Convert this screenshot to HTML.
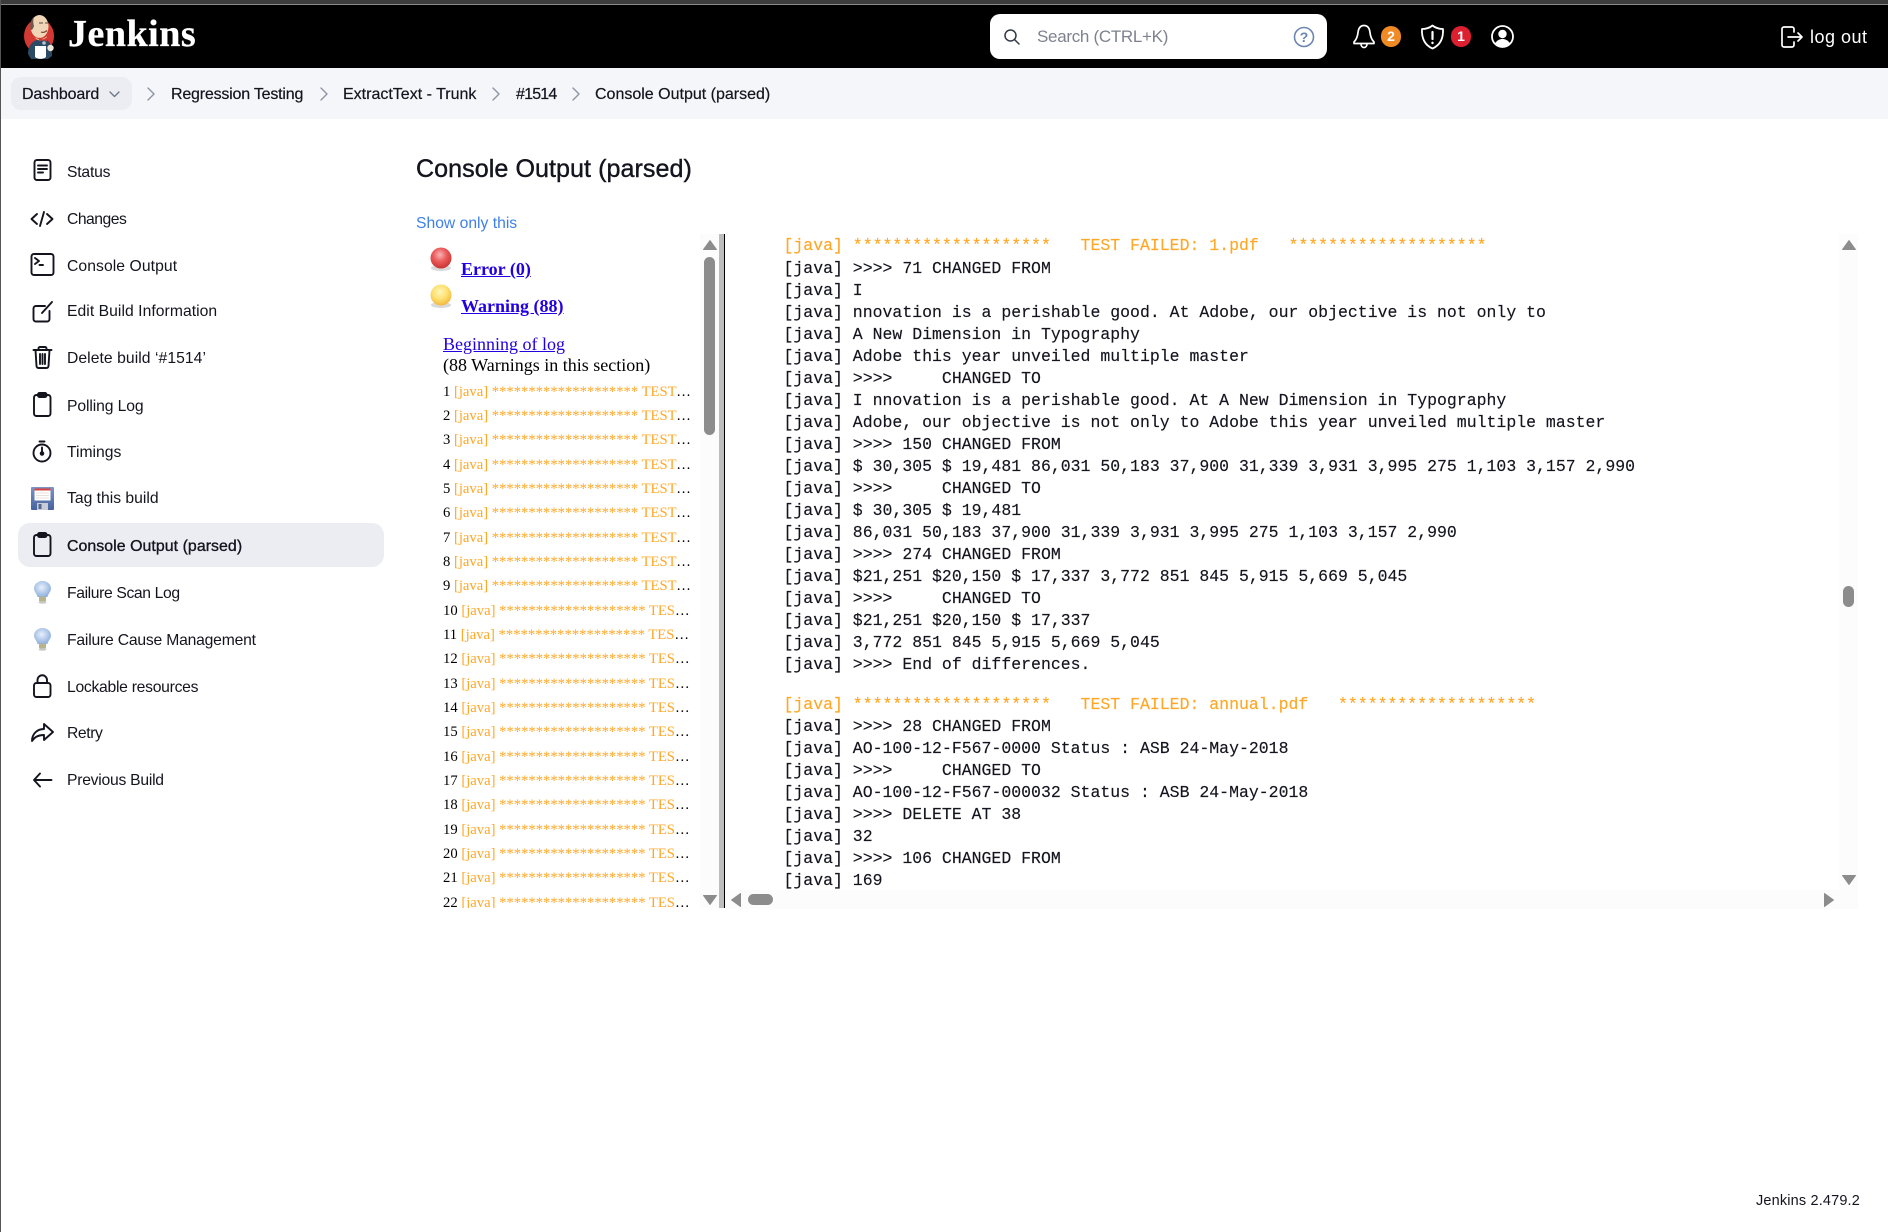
<!DOCTYPE html>
<html lang="en"><head><meta charset="utf-8"><title>Console Output (parsed)</title>
<style>
html,body{margin:0;padding:0;background:#fff}
body{position:relative;width:1888px;height:1232px;overflow:hidden;font-family:"Liberation Sans",sans-serif;color:#14141f}
.a{position:absolute;white-space:nowrap}
.topstrip{left:0;top:0;width:1888px;height:4px;background:#3c3c3c}
.topline{left:0;top:4px;width:1888px;height:1px;background:#8a8a8a}
.hdr{left:0;top:5px;width:1888px;height:63px;background:#000}
.crumbbar{left:0;top:68px;width:1888px;height:51px;background:#f5f6f9}
.edge{left:0;top:0;width:1px;height:1232px;background:#555;z-index:5}
.bc{top:85px;line-height:20px;font-size:16px;-webkit-text-stroke:.2px #14141f}
.side{left:67px;font-size:15.7px;line-height:20px}
.ic{position:absolute;left:28px;width:28px;height:28px;fill:none;stroke:#14141f;stroke-width:1.9;stroke-linecap:round;stroke-linejoin:round}
.ser{font-family:"Liberation Serif",serif;color:#000}
.lnk{color:#2200e0;text-decoration:underline}
.row{position:absolute;left:443px;width:250px;height:24px;line-height:24px;font-family:"Liberation Serif",serif;font-size:14.65px;color:#000;white-space:nowrap;overflow:hidden;text-overflow:ellipsis}
.row span,.or{color:#ffa726}
pre{margin:0;position:absolute;left:58.5px;font-family:"Liberation Mono",monospace;font-size:16.5px;line-height:22px;color:#14141f;-webkit-text-stroke:.15px #14141f}
pre.or{-webkit-text-stroke:.15px #ffa726;color:#ffa726}
</style></head><body>
<div class="a edge"></div>
<div class="a topstrip"></div><div class="a topline"></div><div class="a hdr"></div><div class="a crumbbar"></div>

<!-- logo -->
<svg class="a" style="left:22px;top:14px" width="36" height="46" viewBox="0 0 36 46">
<ellipse cx="17" cy="22" rx="15" ry="17" fill="#d33833"/>
<path d="M6 40C6 31 11 25 21 25c6 0 9 5 9 17l-4 3H9z" fill="#2c4a63"/>
<ellipse cx="17.500" cy="12.500" rx="9" ry="11.500" fill="#f0d6b7"/>
<path d="M8.500 10C9 6 10.500 4 12 3c-1 3-1 6 0 9-1 3-2 4-3 4-1-2-.8-4-.5-6z" fill="#6d5a4e"/>
<path d="M17 9h4M23 9h3" stroke="#5a4a40" stroke-width="1" fill="none"/>
<path d="M19 18c2 .8 4 .3 6-1.500" stroke="#7a4a3a" stroke-width="1.200" fill="none"/>
<path d="M13 23c3 3 8 3 12-1l-1 3c-3 2-7 2-10 0z" fill="#e0bc98"/>
<path d="M17 23.500l4 2 4-2v4l-4-1.500-4 1.500z" fill="#d33833"/>
<path d="M13 32h11v11c-3 2.500-8 2.500-11 0z" fill="#fff"/>
<circle cx="28.500" cy="34" r="3.200" fill="#eee6da"/>
<circle cx="22" cy="29" r="1.800" fill="#b9c6cf"/>
</svg>
<div class="a" style="left:68px;top:12px;font-family:'Liberation Serif',serif;font-weight:bold;font-size:38px;line-height:44px;color:#fff;letter-spacing:.5px;-webkit-text-stroke:.3px #fff">Jenkins</div>

<!-- search -->
<div class="a" style="left:990px;top:14px;width:337px;height:45px;background:#fff;border-radius:10px"></div>
<svg class="a" style="left:1003px;top:28px" width="18" height="18" viewBox="0 0 18 18" fill="none" stroke="#333a45" stroke-width="1.5" stroke-linecap="round"><circle cx="7.500" cy="7.500" r="5.500"/><path d="M11.800 11.800L16 16"/></svg>
<div class="a" style="left:1037px;top:26px;font-size:17px;line-height:22px;color:#7d828e;letter-spacing:-.3px">Search (CTRL+K)</div>
<svg class="a" style="left:1293px;top:26px" width="22" height="22" viewBox="0 0 22 22"><circle cx="11" cy="11" r="9.500" fill="none" stroke="#6b85b0" stroke-width="1.600"/><text x="11" y="16" text-anchor="middle" font-family="Liberation Sans" font-size="14" font-weight="bold" fill="#6b85b0">?</text></svg>

<!-- bell -->
<svg class="a" style="left:1352px;top:24px" width="24" height="26" viewBox="0 0 24 26" fill="none" stroke="#fff" stroke-width="1.700" stroke-linejoin="round" stroke-linecap="round"><path d="M12 1.500c-3.500 0-5.500 2.800-6 7-.4 4-1.200 6.500-4 9.500v1.500h20V18c-2.800-3-3.600-5.500-4-9.500-.5-4.200-2.500-7-6-7z"/><path d="M9 20c0 2 1.300 3.500 3 3.500s3-1.500 3-3.500"/></svg>
<div class="a" style="left:1381px;top:26px;width:20px;height:21px;border-radius:10px;background:#f08a24;color:#fff;font-weight:bold;font-size:14px;line-height:21px;text-align:center">2</div>
<!-- shield -->
<svg class="a" style="left:1420px;top:24px" width="25" height="26" viewBox="0 0 25 26" fill="none" stroke="#fff" stroke-width="1.800" stroke-linecap="round" stroke-linejoin="round"><path d="M12.500 1.500C15.500 4 19 5 23 5c.5 9.500-2.500 16-10.500 19.500C4.500 21 1.500 14.500 2 5c4 0 7.500-1 10.500-3.500z"/><path d="M12.500 8v7" stroke-width="2.200"/><path d="M12.500 18.800v.2" stroke-width="2.400"/></svg>
<div class="a" style="left:1451px;top:26px;width:20px;height:21px;border-radius:10px;background:#dc2030;color:#fff;font-weight:bold;font-size:14px;line-height:21px;text-align:center">1</div>
<!-- user -->
<svg class="a" style="left:1490px;top:24px" width="25" height="25" viewBox="0 0 25 25"><circle cx="12.500" cy="12.500" r="10.500" fill="#000" stroke="#fff" stroke-width="1.800"/><circle cx="12.500" cy="10" r="4.200" fill="#fff"/><path d="M5 19.500c2-3.500 5-4.500 7.500-4.500s5.500 1 7.500 4.500c-2 2-4.500 3.200-7.500 3.200s-5.500-1.200-7.500-3.200z" fill="#fff"/></svg>
<!-- logout -->
<svg class="a" style="left:1780px;top:25px" width="24" height="24" viewBox="0 0 24 24" fill="none" stroke="#fff" stroke-width="1.700" stroke-linecap="round" stroke-linejoin="round"><path d="M14 7V4a2 2 0 0 0-2-2H4a2 2 0 0 0-2 2v16a2 2 0 0 0 2 2h8a2 2 0 0 0 2-2v-3"/><path d="M8 12h14M18 8l4 4-4 4"/></svg>
<div class="a" style="left:1810px;top:26px;font-size:18px;line-height:22px;color:#fff;letter-spacing:.5px">log out</div>

<!-- breadcrumbs -->
<div class="a" style="left:11px;top:77px;width:121px;height:33px;background:#ecedf2;border-radius:10px"></div>
<div class="a bc" style="left:22px;letter-spacing:-.13px">Dashboard</div>
<svg class="a" style="left:108px;top:90px" width="13" height="9" viewBox="0 0 13 9" fill="none" stroke="#6d7486" stroke-width="1.300" stroke-linecap="round" stroke-linejoin="round"><path d="M2 2l4.500 4.500L11 2"/></svg>
<svg class="a" style="left:146px;top:85px" width="10" height="18" viewBox="0 0 10 18" fill="none" stroke="#8d93a3" stroke-width="1.400" stroke-linecap="round" stroke-linejoin="round"><path d="M2 3l6 6-6 6"/></svg>
<div class="a bc" style="left:171px;letter-spacing:-.2px">Regression Testing</div>
<svg class="a" style="left:319px;top:85px" width="10" height="18" viewBox="0 0 10 18" fill="none" stroke="#8d93a3" stroke-width="1.400" stroke-linecap="round" stroke-linejoin="round"><path d="M2 3l6 6-6 6"/></svg>
<div class="a bc" style="left:343px">ExtractText - Trunk</div>
<svg class="a" style="left:491px;top:85px" width="10" height="18" viewBox="0 0 10 18" fill="none" stroke="#8d93a3" stroke-width="1.400" stroke-linecap="round" stroke-linejoin="round"><path d="M2 3l6 6-6 6"/></svg>
<div class="a bc" style="left:516px;letter-spacing:-.8px">#1514</div>
<svg class="a" style="left:571px;top:85px" width="10" height="18" viewBox="0 0 10 18" fill="none" stroke="#8d93a3" stroke-width="1.400" stroke-linecap="round" stroke-linejoin="round"><path d="M2 3l6 6-6 6"/></svg>
<div class="a bc" style="left:595px">Console Output (parsed)</div>

<!-- sidebar -->
<div class="a" style="left:18px;top:523px;width:366px;height:44px;background:#ecedf2;border-radius:12px"></div>

<svg class="ic" style="top:158px" viewBox="0 0 28 28"><rect x="6.500" y="2" width="16" height="20" rx="2.500"/><path d="M10 7.500h9M10 11h9M10 14.500h5"/></svg>
<div class="a side" style="top:163px;letter-spacing:-.2px">Status</div>
<svg class="ic" style="top:205px" viewBox="0 0 28 28"><path d="M9 9l-5.500 5L9 19M19 9l5.500 5L19 19M16 7l-4 14"/></svg>
<div class="a side" style="top:210px;letter-spacing:-.5px">Changes</div>
<svg class="ic" style="top:252px" viewBox="0 0 28 28"><rect x="3.500" y="2" width="22" height="21" rx="2.500"/><path d="M7 6l4 3-4 3M11.500 13H15"/></svg>
<div class="a side" style="top:257px;letter-spacing:.08px">Console Output</div>
<svg class="ic" style="top:297px" viewBox="0 0 28 28"><path d="M17 9H8a2.500 2.500 0 0 0-2.500 2.500v10.500A2.500 2.500 0 0 0 8 24.500h11a2.500 2.500 0 0 0 2.500-2.500V14"/><path d="M14 16L24 5"/></svg>
<div class="a side" style="top:302px;letter-spacing:.05px">Edit Build Information</div>
<svg class="ic" style="top:344px" viewBox="0 0 28 28"><path d="M5.500 6h18M10.500 6V4.500a1.500 1.500 0 0 1 1.500-1.500h5a1.500 1.500 0 0 1 1.500 1.500V6M7.500 6l1 16a2 2 0 0 0 2 2h8a2 2 0 0 0 2-2l1-16M12 10v10M14.500 10v10M17 10v10"/></svg>
<div class="a side" style="top:349px;letter-spacing:.06px">Delete build ‘#1514’</div>
<svg class="ic" style="top:392px" viewBox="0 0 28 28"><rect x="6" y="3" width="16.500" height="21" rx="2.500"/><rect x="10" y="1" width="8.500" height="4" rx="1.500"/></svg>
<div class="a side" style="top:397px;letter-spacing:-.1px">Polling Log</div>
<svg class="ic" style="top:438px" viewBox="0 0 28 28"><circle cx="14" cy="15" r="8.500"/><path d="M11.500 3.500h5M14 9.500v5"/><circle cx="14" cy="15.500" r="1.300" fill="#14141f"/></svg>
<div class="a side" style="top:443px">Timings</div>
<svg class="a" style="left:31px;top:487px" width="23" height="23" viewBox="0 0 23 23"><defs><linearGradient id="fl" x1="0" y1="0" x2="0" y2="1"><stop offset="0" stop-color="#7c93c6"/><stop offset="1" stop-color="#46639f"/></linearGradient></defs><rect width="23" height="23" rx="1" fill="url(#fl)"/><rect x="3.500" y="1.500" width="16" height="12" fill="#fff"/><rect x="3.500" y="1.500" width="16" height="2" fill="#d8443c"/><path d="M5 6h13M5 8.500h13M5 11h13" stroke="#e8e0d8" stroke-width="1"/><rect x="6" y="16" width="11" height="7" fill="#c7ccd6"/><rect x="7.500" y="17" width="3" height="5" fill="#54668c"/></svg>
<div class="a side" style="top:489px">Tag this build</div>
<svg class="ic" style="top:532px" viewBox="0 0 28 28"><rect x="6" y="3" width="16.500" height="21" rx="2.500"/><rect x="10" y="1" width="8.500" height="4" rx="1.500"/></svg>
<div class="a side" style="top:537px;font-size:15.9px;letter-spacing:.05px;-webkit-text-stroke:.35px #14141f">Console Output (parsed)</div>

<svg class="a" style="left:33px;top:580px" width="19" height="24" viewBox="0 0 19 24"><defs><radialGradient id="bl" cx=".45" cy=".4" r=".6"><stop offset="0" stop-color="#e8f0fb"/><stop offset="1" stop-color="#8fb0de"/></radialGradient></defs><path d="M9.500 1C4.500 1 1 4.500 1 8.500c0 3.500 3 5 3.500 8.500h10C15 13.500 18 12 18 8.500 18 4.500 14.500 1 9.500 1z" fill="url(#bl)"/><rect x="6" y="16.500" width="7" height="5" rx="1" fill="#b6b48e"/><ellipse cx="9.500" cy="22.500" rx="4" ry="1.300" fill="#c9c9c9"/></svg>
<div class="a side" style="top:584px;letter-spacing:-.37px">Failure Scan Log</div>
<svg class="a" style="left:33px;top:627px" width="19" height="24" viewBox="0 0 19 24"><path d="M9.500 1C4.500 1 1 4.500 1 8.500c0 3.500 3 5 3.500 8.500h10C15 13.500 18 12 18 8.500 18 4.500 14.500 1 9.500 1z" fill="url(#bl)"/><rect x="6" y="16.500" width="7" height="5" rx="1" fill="#b6b48e"/><ellipse cx="9.500" cy="22.500" rx="4" ry="1.300" fill="#c9c9c9"/></svg>
<div class="a side" style="top:631px;letter-spacing:-.2px">Failure Cause Management</div>
<svg class="ic" style="top:673px" viewBox="0 0 28 28"><rect x="6" y="10" width="16.500" height="14" rx="2.500"/><path d="M9.500 10V7a4.750 4.750 0 0 1 9.500 0v3"/></svg>
<div class="a side" style="top:678px;letter-spacing:-.27px">Lockable resources</div>
<svg class="ic" style="top:719px" viewBox="0 0 28 28"><path d="M16 5L25 13l-9 8v-5C10 16 6.500 18 4 22c0-7 5-12 12-12z"/></svg>
<div class="a side" style="top:724px;letter-spacing:-.4px">Retry</div>
<svg class="ic" style="top:766px" viewBox="0 0 28 28"><path d="M23.500 14H6.500M12 7.500L6 14l6 6.500"/></svg>
<div class="a side" style="top:771px;letter-spacing:-.25px">Previous Build</div>

<!-- main heading -->
<div class="a" style="left:416px;top:153px;font-size:25.1px;line-height:32px;letter-spacing:.05px;-webkit-text-stroke:.4px #14141f">Console Output (parsed)</div>
<div class="a" style="left:416px;top:214px;font-size:15.700px;line-height:20px;color:#3f7fe8">Show only this</div>

<!-- left frame -->
<svg class="a" style="left:429px;top:246px" width="24" height="62" viewBox="0 0 24 62"><defs><radialGradient id="rb" cx=".45" cy=".35" r=".65"><stop offset="0" stop-color="#f7b5b5"/><stop offset=".5" stop-color="#ec5a5a"/><stop offset="1" stop-color="#c93434"/></radialGradient><radialGradient id="yb" cx=".45" cy=".35" r=".65"><stop offset="0" stop-color="#fff6b8"/><stop offset=".55" stop-color="#fde070"/><stop offset="1" stop-color="#f2b840"/></radialGradient></defs><ellipse cx="12" cy="22" rx="10" ry="3" fill="#d9d9d9"/><circle cx="12" cy="12" r="10.500" fill="url(#rb)"/><ellipse cx="12" cy="59" rx="10" ry="3" fill="#d9d9d9"/><circle cx="12" cy="49" r="10.500" fill="url(#yb)"/></svg>
<div class="a ser" style="left:461px;top:258px;font-size:18px;line-height:22px;font-weight:bold"><span class="lnk">Error (0)</span></div>
<div class="a ser" style="left:461px;top:295px;font-size:18px;line-height:22px;font-weight:bold"><span class="lnk">Warning (88)</span></div>
<div class="a ser" style="left:443px;top:334px;font-size:18px;line-height:21px"><span class="lnk">Beginning of log</span></div>
<div class="a ser" style="left:443px;top:355px;font-size:18px;line-height:21px">(88 Warnings in this section)</div>

<div class="a" style="left:0;top:0;width:700px;height:908px;overflow:hidden">
<div class="row" style="top:380px">1 <span>[java] ******************** TEST FAILED: 1.pdf</span></div>
<div class="row" style="top:404px">2 <span>[java] ******************** TEST FAILED: annual.pdf</span></div>
<div class="row" style="top:428px">3 <span>[java] ******************** TEST FAILED: 3.pdf</span></div>
<div class="row" style="top:453px">4 <span>[java] ******************** TEST FAILED: 4.pdf</span></div>
<div class="row" style="top:477px">5 <span>[java] ******************** TEST FAILED: 5.pdf</span></div>
<div class="row" style="top:501px">6 <span>[java] ******************** TEST FAILED: 6.pdf</span></div>
<div class="row" style="top:526px">7 <span>[java] ******************** TEST FAILED: 7.pdf</span></div>
<div class="row" style="top:550px">8 <span>[java] ******************** TEST FAILED: 8.pdf</span></div>
<div class="row" style="top:574px">9 <span>[java] ******************** TEST FAILED: 9.pdf</span></div>
<div class="row" style="top:599px">10 <span>[java] ******************** TEST FAILED: 10.pdf</span></div>
<div class="row" style="top:623px">11 <span>[java] ******************** TEST FAILED: 11.pdf</span></div>
<div class="row" style="top:647px">12 <span>[java] ******************** TEST FAILED: 12.pdf</span></div>
<div class="row" style="top:672px">13 <span>[java] ******************** TEST FAILED: 13.pdf</span></div>
<div class="row" style="top:696px">14 <span>[java] ******************** TEST FAILED: 14.pdf</span></div>
<div class="row" style="top:720px">15 <span>[java] ******************** TEST FAILED: 15.pdf</span></div>
<div class="row" style="top:745px">16 <span>[java] ******************** TEST FAILED: 16.pdf</span></div>
<div class="row" style="top:769px">17 <span>[java] ******************** TEST FAILED: 17.pdf</span></div>
<div class="row" style="top:793px">18 <span>[java] ******************** TEST FAILED: 18.pdf</span></div>
<div class="row" style="top:818px">19 <span>[java] ******************** TEST FAILED: 19.pdf</span></div>
<div class="row" style="top:842px">20 <span>[java] ******************** TEST FAILED: 20.pdf</span></div>
<div class="row" style="top:866px">21 <span>[java] ******************** TEST FAILED: 21.pdf</span></div>
<div class="row" style="top:891px">22 <span>[java] ******************** TEST FAILED: 22.pdf</span></div>
</div>

<!-- left scrollbar + splitter -->
<div class="a" style="left:700px;top:234px;width:19px;height:674px;background:#fcfcfc"></div>
<div class="a" style="left:704px;top:257px;width:11px;height:178px;background:#8c8c8c;border-radius:6px"></div>
<svg class="a" style="left:702px;top:239px" width="16" height="12" viewBox="0 0 16 12"><path d="M8 1.500L14.500 10.500H1.500z" fill="#8c8c8c" stroke="#8c8c8c" stroke-linejoin="round"/></svg>
<svg class="a" style="left:702px;top:894px" width="16" height="12" viewBox="0 0 16 12"><path d="M1.500 1.500H14.500L8 10.500z" fill="#8c8c8c" stroke="#8c8c8c" stroke-linejoin="round"/></svg>
<div class="a" style="left:719px;top:234px;width:5px;height:674px;background:#bdbdbd"></div>
<div class="a" style="left:724px;top:234px;width:1px;height:674px;background:#000"></div>

<!-- right frame -->
<div class="a" style="left:725px;top:234px;width:1114px;height:656px;overflow:hidden">
<pre class="or" style="top:1px">[java] ********************   TEST FAILED: 1.pdf   ********************</pre>
<pre style="top:24px">[java] &gt;&gt;&gt;&gt; 71 CHANGED FROM
[java] I
[java] nnovation is a perishable good. At Adobe, our objective is not only to
[java] A New Dimension in Typography
[java] Adobe this year unveiled multiple master
[java] &gt;&gt;&gt;&gt;     CHANGED TO
[java] I nnovation is a perishable good. At A New Dimension in Typography
[java] Adobe, our objective is not only to Adobe this year unveiled multiple master
[java] &gt;&gt;&gt;&gt; 150 CHANGED FROM
[java] $ 30,305 $ 19,481 86,031 50,183 37,900 31,339 3,931 3,995 275 1,103 3,157 2,990
[java] &gt;&gt;&gt;&gt;     CHANGED TO
[java] $ 30,305 $ 19,481
[java] 86,031 50,183 37,900 31,339 3,931 3,995 275 1,103 3,157 2,990
[java] &gt;&gt;&gt;&gt; 274 CHANGED FROM
[java] $21,251 $20,150 $ 17,337 3,772 851 845 5,915 5,669 5,045
[java] &gt;&gt;&gt;&gt;     CHANGED TO
[java] $21,251 $20,150 $ 17,337
[java] 3,772 851 845 5,915 5,669 5,045
[java] &gt;&gt;&gt;&gt; End of differences.</pre>
<pre class="or" style="top:459.5px">[java] ********************   TEST FAILED: annual.pdf   ********************</pre>
<pre style="top:482px">[java] &gt;&gt;&gt;&gt; 28 CHANGED FROM
[java] AO-100-12-F567-0000 Status : ASB 24-May-2018
[java] &gt;&gt;&gt;&gt;     CHANGED TO
[java] AO-100-12-F567-000032 Status : ASB 24-May-2018
[java] &gt;&gt;&gt;&gt; DELETE AT 38
[java] 32
[java] &gt;&gt;&gt;&gt; 106 CHANGED FROM
[java] 169</pre>
</div>

<!-- right scrollbars -->
<div class="a" style="left:1839px;top:234px;width:19px;height:675px;background:#fcfcfc"></div>
<div class="a" style="left:725px;top:890px;width:1133px;height:19px;background:#fcfcfc"></div>
<svg class="a" style="left:1841px;top:239px" width="16" height="12" viewBox="0 0 16 12"><path d="M8 1.500L14.500 10.500H1.500z" fill="#8c8c8c" stroke="#8c8c8c" stroke-linejoin="round"/></svg>
<div class="a" style="left:1843px;top:586px;width:11px;height:21px;background:#8c8c8c;border-radius:6px"></div>
<svg class="a" style="left:1841px;top:874px" width="16" height="12" viewBox="0 0 16 12"><path d="M1.500 1.500H14.500L8 10.500z" fill="#8c8c8c" stroke="#8c8c8c" stroke-linejoin="round"/></svg>
<svg class="a" style="left:730px;top:892px" width="12" height="16" viewBox="0 0 12 16"><path d="M10.500 1.500V14.500L1.500 8z" fill="#8c8c8c" stroke="#8c8c8c" stroke-linejoin="round"/></svg>
<div class="a" style="left:748px;top:894px;width:25px;height:11px;background:#8c8c8c;border-radius:6px"></div>
<svg class="a" style="left:1823px;top:892px" width="12" height="16" viewBox="0 0 12 16"><path d="M1.500 1.500V14.500L10.500 8z" fill="#8c8c8c" stroke="#8c8c8c" stroke-linejoin="round"/></svg>

<div class="a" style="left:1756px;top:1191px;font-size:14.500px;line-height:20px;letter-spacing:.16px">Jenkins 2.479.2</div>
</body></html>
